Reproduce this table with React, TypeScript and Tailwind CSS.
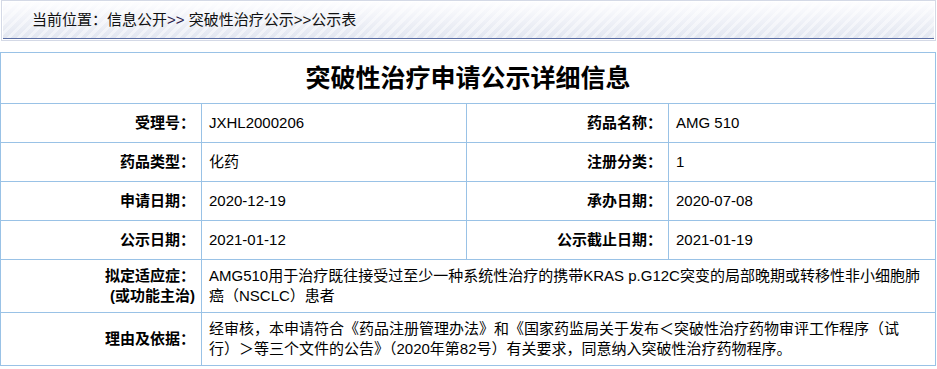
const rows = [
  ["受理号：", "JXHL2000206", "药品名称：", "AMG 510"],
  ["药品类型：", "化药", "注册分类：", "1"],
  ["申请日期：", "2020-12-19", "承办日期：", "2020-07-08"],
  ["公示日期：", "2021-01-12", "公示截止日期：", "2021-01-19"],
];

const font = "font-['Liberation_Sans','Noto_Sans_CJK_SC',sans-serif]";

function Label({ children }: { children: React.ReactNode }) {
  return (
    <td className="border border-[#99c2e6] text-right font-bold pr-[6px] text-black">
      {children}
    </td>
  );
}

function Value({ children, span }: { children: React.ReactNode; span?: number }) {
  return (
    <td
      colSpan={span}
      className="border border-[#99c2e6] text-left pl-[7px] pr-[14px] text-black"
    >
      {children}
    </td>
  );
}

export default function App() {
  return (
    <div className={`w-[937px] h-[369px] bg-white ${font} text-[15px] leading-[20px]`}>
      <div className="ml-px w-[935px] border border-[#d4d9e6] bg-white p-px">
        <div className="h-[37px] border-b border-[#5a6da3] bg-[image:repeating-linear-gradient(135deg,rgba(255,255,255,0.45)_0px,rgba(255,255,255,0.45)_3px,transparent_3px,transparent_7px),linear-gradient(to_bottom,#fdfdff,#e2e6f0)] flex items-center pl-[29px] text-[#111]">
          当前位置：信息公开<span className="text-[#2a1a4a]">&gt;&gt;</span>&nbsp;突破性治疗公示&gt;&gt;公示表
        </div>
      </div>

      <table className="mt-[11px] w-[935px] table-fixed border-collapse">
        <colgroup>
          <col className="w-[201px]" />
          <col className="w-[265px]" />
          <col className="w-[202px]" />
          <col className="w-[267px]" />
        </colgroup>
        <tbody>
          <tr className="h-[51px]">
            <td
              colSpan={4}
              className="border border-[#99c2e6] text-center font-bold text-[25px] leading-[30px] text-black"
            >
              突破性治疗申请公示详细信息
            </td>
          </tr>
          {rows.map((r) => (
            <tr key={r[0]} className="h-[39px]">
              <Label>{r[0]}</Label>
              <Value>{r[1]}</Value>
              <Label>{r[2]}</Label>
              <Value>{r[3]}</Value>
            </tr>
          ))}
          <tr className="h-[53px]">
            <Label>
              拟定适应症：
              <br />
              (或功能主治)
            </Label>
            <Value span={3}>
              AMG510用于治疗既往接受过至少一种系统性治疗的携带KRAS p.G12C突变的局部晚期或转移性非小细胞肺癌（NSCLC）患者
            </Value>
          </tr>
          <tr className="h-[53px]">
            <Label>理由及依据：</Label>
            <Value span={3}>
              经审核，本申请符合《药品注册管理办法》和《国家药监局关于发布＜突破性治疗药物审评工作程序（试行）＞等三个文件的公告》（2020年第82号）有关要求，同意纳入突破性治疗药物程序。
            </Value>
          </tr>
        </tbody>
      </table>
    </div>
  );
}
